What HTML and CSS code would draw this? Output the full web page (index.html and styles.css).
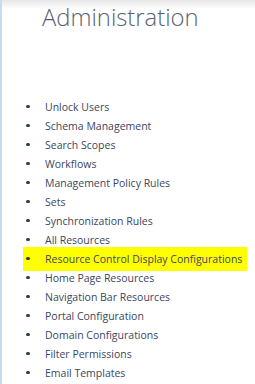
FILE: index.html
```html
<html>
  <head>
    <title>Administration</title>
    <link rel="stylesheet" href="styles.css">
  </head>
  <body>
    <div class="page">
      <h1 class="pageTitle">Administration</h1>

      <ul class="adminLinks">
        <li>Unlock Users</li>
        <li>Schema Management</li>
        <li>Search Scopes</li>
        <li>Workflows</li>
        <li>Management Policy Rules</li>
        <li>Sets</li>
        <li>Synchronization Rules</li>
        <li>All Resources</li>
        <li class="marked">Resource Control Display Configurations</li>
        <li>Home Page Resources</li>
        <li>Navigation Bar Resources</li>
        <li>Portal Configuration</li>
        <li>Domain Configurations</li>
        <li>Filter Permissions</li>
        <li>Email Templates</li>
      </ul>
    </div>
  </body>
</html>
```

FILE: styles.css
```css
body {
  margin: 0;
  font-family: "Open Sans", "Noto Sans", sans-serif;
  background-color: #ffffff;
}

.page {
  min-height: 384px;
  border-left: 2px solid #c8dbe9;
  background: linear-gradient(#e6e6e6, #ffffff 9px);
  overflow: hidden;
}

.pageTitle {
  margin: 2px 0 0 40px;
  font-size: 23.8px;
  font-weight: 300;
  color: #5a6272;
  line-height: 30px;
}

.adminLinks {
  list-style: none;
  margin: 65px 0 0 21px;
  padding: 0;
}

.adminLinks li {
  display: flex;
  align-items: center;
  width: fit-content;
  height: 19px;
  padding-right: 5px;
  font-size: 10.5px;
  color: #3b4661;
}

.adminLinks li::before {
  content: "";
  width: 3.5px;
  height: 3.5px;
  border-radius: 50%;
  background-color: #2e3d5c;
  margin-left: 3px;
  margin-right: 15.5px;
}

.marked {
  background-color: #ffff00;
  padding-top: 2px;
  padding-bottom: 3px;
  margin-top: -2px;
  margin-bottom: -3px;
}
```
